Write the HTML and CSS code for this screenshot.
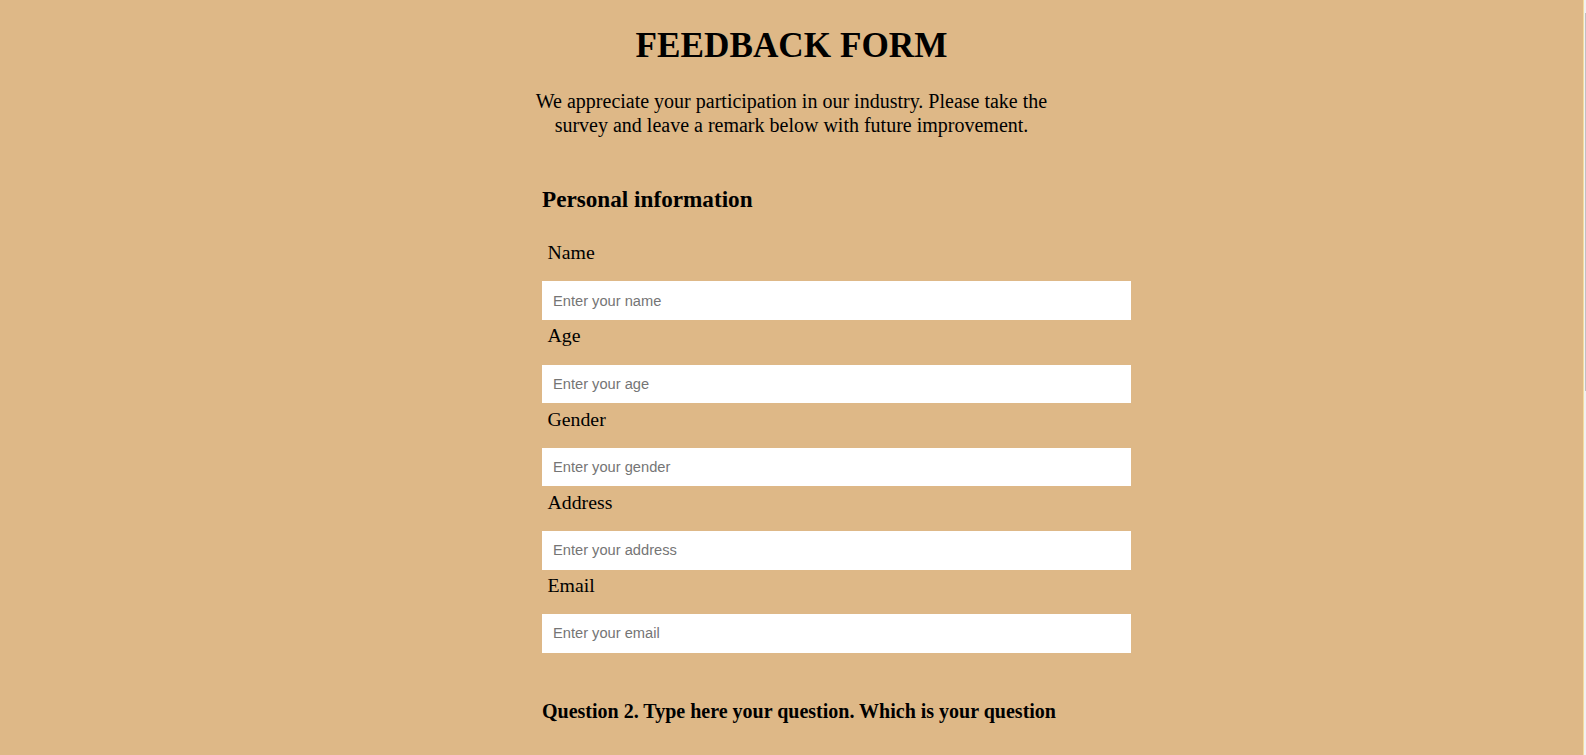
FILE: index.html
```html
<!DOCTYPE html>
<html lang="en">
<head>
<meta charset="utf-8">
<title>Feedback Form</title>
<link rel="stylesheet" href="styles.css">
</head>
<body>
<div class="scrollbar" aria-hidden="true"><div class="scrollbar-thumb"></div></div>
<header class="intro">
  <h1 class="title">FEEDBACK FORM</h1>
  <p class="lead">We appreciate your participation in our industry. Please take the survey and leave a remark below with future improvement.</p>
</header>
<form class="form">
  <h3 class="section-title">Personal information</h3>
  <label class="field-label" for="name">Name</label>
  <input class="field" id="name" type="text" placeholder="Enter your name">
  <label class="field-label" for="age">Age</label>
  <input class="field" id="age" type="text" placeholder="Enter your age">
  <label class="field-label" for="gender">Gender</label>
  <input class="field" id="gender" type="text" placeholder="Enter your gender">
  <label class="field-label" for="address">Address</label>
  <input class="field" id="address" type="text" placeholder="Enter your address">
  <label class="field-label" for="email">Email</label>
  <input class="field" id="email" type="text" placeholder="Enter your email">

  <h4 class="question">Question 2. Type here your question. Which is your question</h4>
  <div class="options">
    <label class="option"><input type="radio" name="q2"> Option 1</label>
    <label class="option"><input type="radio" name="q2"> Option 2</label>
    <label class="option"><input type="radio" name="q2"> Option 3</label>
    <label class="option"><input type="radio" name="q2"> Option 4</label>
  </div>

  <h4 class="question">Question 3. Which features would you like to improve?</h4>
  <div class="options">
    <label class="option"><input type="checkbox"> Quality</label>
    <label class="option"><input type="checkbox"> Price</label>
    <label class="option"><input type="checkbox"> Delivery</label>
    <label class="option"><input type="checkbox"> Support</label>
  </div>

  <h4 class="question">Remarks</h4>
  <textarea class="remarks" placeholder="Leave your remark here"></textarea>
  <button class="submit" type="submit">Submit</button>
</form>
</body>
</html>
```
FILE: styles.css
```css
html {
  background: #deb887;
}
body {
  margin: 0 3px 0 0;
  background: #deb887;
  color: #000;
  font-family: "Liberation Serif", "Times New Roman", serif;
  padding-bottom: 120px;
}
.scrollbar {
  position: fixed;
  top: 0;
  right: 0;
  width: 3px;
  height: 100%;
  background: #f1f1f1;
  border-left: 1px solid #f3dca0;
  box-sizing: border-box;
}
.scrollbar-thumb {
  margin-top: 13px;
  margin-left: auto;
  width: 1px;
  height: 378px;
  background: #c1c1c1;
}
.intro {
  text-align: center;
}
.title {
  margin: 26px 0 0;
  font-size: 35.2px;
  line-height: 40px;
  font-weight: bold;
}
.lead {
  width: 520px;
  margin: 24px auto 0;
  font-size: 20px;
  line-height: 23.5px;
}
.form {
  width: 589px;
  margin-left: calc(50% - 249.5px);
  display: flex;
  flex-direction: column;
}
.section-title {
  margin: 49px 0 0;
  font-size: 23.2px;
  line-height: 27px;
  font-weight: bold;
}
.field-label {
  display: block;
  padding: 5.5px 5.5px 0;
  font-size: 19.8px;
  line-height: 20px;
  margin-bottom: 19.2px;
}
.section-title + .field-label {
  margin-top: 23.8px;
}
.field {
  box-sizing: border-box;
  width: 100%;
  height: 38.5px;
  border: none;
  outline: none;
  margin: 0;
  padding: 0 11px;
  background: #fff;
  font-family: "Liberation Sans", Arial, sans-serif;
  font-size: 14.67px;
  color: #000;
}
.field::placeholder {
  color: #757575;
}
.question {
  margin: 45px 0 0;
  font-size: 20px;
  line-height: 27px;
  font-weight: bold;
}
.options {
  display: flex;
  flex-direction: column;
  gap: 14px;
  margin-top: 60px;
  padding-left: 5.5px;
}
.option {
  font-size: 19.8px;
  line-height: 24px;
}
.remarks {
  box-sizing: border-box;
  width: 100%;
  height: 140px;
  margin-top: 22px;
  border: none;
  padding: 11px;
  font-family: "Liberation Sans", Arial, sans-serif;
  font-size: 14.67px;
  resize: none;
}
.submit {
  align-self: flex-start;
  margin-top: 30px;
  padding: 10px 28px;
  border: none;
  background: #fff;
  font-family: "Liberation Serif", "Times New Roman", serif;
  font-size: 19.8px;
}
```
